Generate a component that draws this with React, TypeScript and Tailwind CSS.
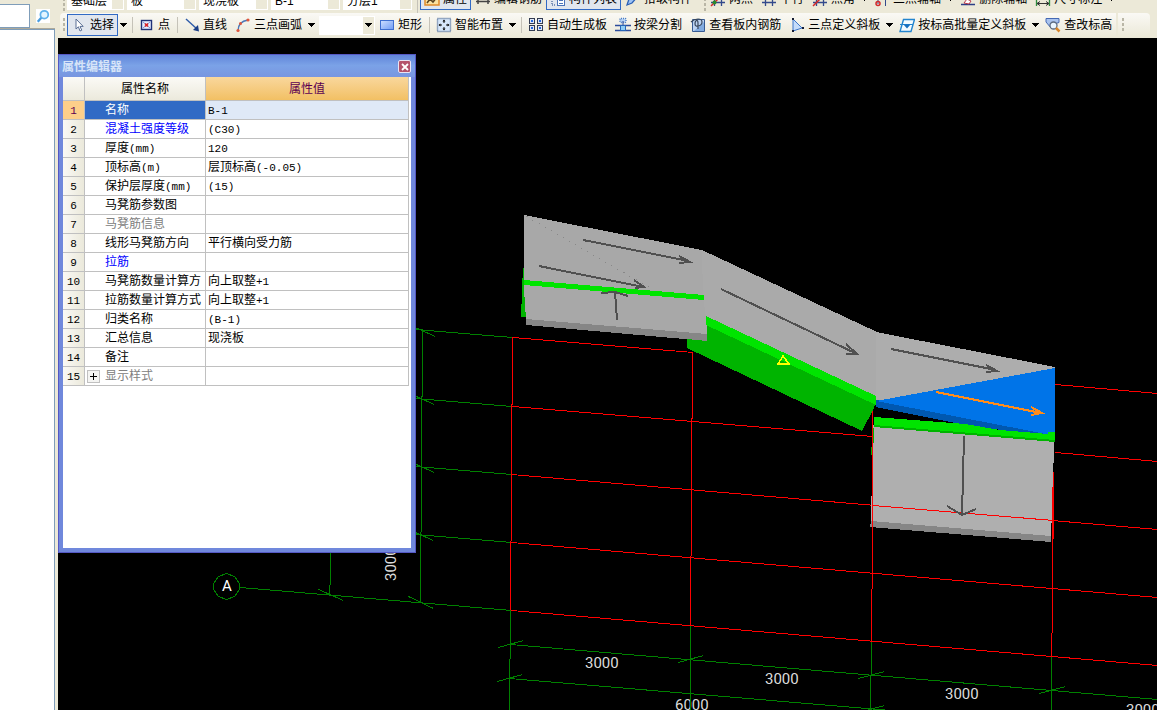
import { useState, type ReactNode } from 'react';
import { clsx } from 'clsx';

const FONT = "font-['Liberation_Sans','Noto_Sans_CJK_SC',sans-serif]";

type Row = { name: string; value: string; tone?: 'link' | 'muted'; expandable?: boolean };

const ROWS: Row[] = [
  { name: '名称', value: 'B-1' },
  { name: '混凝土强度等级', value: '(C30)', tone: 'link' },
  { name: '厚度(mm)', value: '120' },
  { name: '顶标高(m)', value: '层顶标高(-0.05)' },
  { name: '保护层厚度(mm)', value: '(15)' },
  { name: '马凳筋参数图', value: '' },
  { name: '马凳筋信息', value: '', tone: 'muted' },
  { name: '线形马凳筋方向', value: '平行横向受力筋' },
  { name: '拉筋', value: '', tone: 'link' },
  { name: '马凳筋数量计算方', value: '向上取整+1' },
  { name: '拉筋数量计算方式', value: '向上取整+1' },
  { name: '归类名称', value: '(B-1)' },
  { name: '汇总信息', value: '现浇板' },
  { name: '备注', value: '' },
  { name: '显示样式', value: '', tone: 'muted', expandable: true },
];

/* ---------- icons ---------- */

function Glyph({ children }: { children: ReactNode }) {
  return (
    <svg viewBox="0 0 16 16" className="size-4 shrink-0" fill="none" aria-hidden="true">
      {children}
    </svg>
  );
}

const CursorIcon = () => (
  <Glyph>
    <path d="M5 2v10l2.4-2.2L9 14l1.8-.8L9 9.4h3.2z" fill="#fff" stroke="#5b6f95" />
  </Glyph>
);

const PointIcon = () => (
  <Glyph>
    <rect x="2.5" y="3.5" width="10" height="9" fill="#e4ecff" stroke="#1f3278" strokeWidth="1.4" />
    <path d="M4 5l7 6M11 5l-7 6" stroke="#7f96d8" />
    <path d="M6 6.5l3 3M9 6.5l-3 3" stroke="#e02020" strokeWidth="1.6" />
  </Glyph>
);

const LineIcon = () => (
  <Glyph>
    <path d="M2 2l11 10" stroke="#2c5aa8" strokeWidth="1.4" />
    <path d="M15 14.5l-6-1.5 5-5z" fill="#1b3f87" />
  </Glyph>
);

const ArcIcon = () => (
  <Glyph>
    <path d="M3 14C3 8 6 4 13 3" stroke="#4a78b8" strokeWidth="1.4" />
    <circle cx="3" cy="13.5" r="1.6" fill="#e0563c" />
    <circle cx="5.5" cy="6.5" r="1.5" fill="#e0563c" />
    <circle cx="13" cy="3" r="1.6" fill="#e0563c" />
  </Glyph>
);

const RectIcon = () => (
  <Glyph>
    <defs>
      <linearGradient id="rectFill" x1="0" y1="0" x2="1" y2="1">
        <stop offset="0" stopColor="#cfe0ff" />
        <stop offset="1" stopColor="#6f9bf5" />
      </linearGradient>
    </defs>
    <rect x="1.5" y="3.5" width="13" height="9" fill="url(#rectFill)" stroke="#3f6fd0" />
  </Glyph>
);

const SmartIcon = () => (
  <Glyph>
    <rect x="1.5" y="1.5" width="13" height="13" fill="#d8e8fb" stroke="#41608f" strokeWidth="1.4" strokeDasharray="1 1" />
    <path d="M8 3v3M8 10v3M3 8h3M10 8h3" stroke="#111" />
    <path d="M6.5 4.500h3L8 2.500zM6.500 11.500h3l-1.500 2zM4.500 6.500v3l-2-1.500zM11.500 6.500v3l2-1.500z" fill="#111" />
  </Glyph>
);

const GridBoxesIcon = () => (
  <Glyph>
    {[1.5, 9.5].map((x) =>
      [1.5, 8.5].map((y) => (
        <g key={`${x}-${y}`}>
          <rect x={x} y={y} width="5" height="5" fill="#dfe8f8" stroke="#333c52" />
          <rect x={x + 1.5} y={y + 1.5} width="2" height="2" fill="#2467e0" />
        </g>
      )),
    )}
  </Glyph>
);

const BeamSplitIcon = () => (
  <Glyph>
    <rect x="5" y="1.5" width="6" height="4" rx="1" fill="#b7d3f4" stroke="#4c7dc4" strokeWidth="1.4" strokeDasharray="1 1" />
    <path d="M0 8.5h16M0 13.5h16" stroke="#2c4c9c" strokeWidth="1.4" />
    <rect x="5.5" y="8.5" width="5" height="5" fill="#8ecdf5" stroke="#2867b8" />
    <path d="M8 4v4" stroke="#2c4c9c" />
  </Glyph>
);

const RebarViewIcon = () => (
  <Glyph>
    <path d="M2.500 2.500h12v12h-12z" fill="#bcd3f2" stroke="#375b93" />
    <path d="M4 14l10-9v9z" fill="#82abdf" />
    <path d="M1 5c4-4 11-4 11 0s-7 6-7 2 3-5 3-1v6" stroke="#38475c" strokeWidth="1.2" />
  </Glyph>
);

const ThreePointIcon = () => (
  <Glyph>
    <path d="M4 2l9 9-9 3z" fill="#c5dcfa" stroke="#3a74c8" />
    <path d="M3 1h2v2H3zM13 10h2v2h-2zM3 13h2v2H3z" fill="#141c33" />
  </Glyph>
);

const BatchSlopeIcon = () => (
  <Glyph>
    <path d="M4.500 2.500h11l-3.500 12H1z" fill="#f4fbff" stroke="#2385cf" strokeWidth="1.4" />
    <path d="M1 7.500h13" stroke="#2385cf" />
    <path d="M4.500 7.500h7L8 11.500z" fill="#176fbf" />
  </Glyph>
);

const CheckLevelIcon = () => (
  <Glyph>
    <path d="M1 1.500h13v4L9 7 6 11 1 5z" fill="#a9c3ee" stroke="#4469b4" />
    <circle cx="8.500" cy="8.500" r="3.500" fill="#eaf6ff" stroke="#5c6b80" strokeWidth="1.3" />
    <path d="M11 11l3.500 3.500" stroke="#d9862a" strokeWidth="2.500" />
  </Glyph>
);

const PropsIcon = () => (
  <Glyph>
    <rect x="1" y="2" width="14" height="12" fill="#fbe2a0" stroke="#e08a28" strokeWidth="1.5" />
    <path d="M3 12l3-4 3 3 4-5" stroke="#5a4420" strokeWidth="1.600" />
  </Glyph>
);

const EditBarIcon = () => (
  <Glyph>
    <path d="M1 10.500h14M3 8v5M13 8v5" stroke="#444" strokeWidth="1.500" />
  </Glyph>
);

const ListIcon = () => (
  <Glyph>
    <path d="M2 4v10h4" stroke="#5b76a5" strokeDasharray="1 1" strokeWidth="1.500" />
    <rect x="7.500" y="3.500" width="7" height="11" fill="#fff" stroke="#4c74b8" />
    <path d="M9 6.500h4M9 9.500h4M9 12.500h4" stroke="#4c74b8" />
  </Glyph>
);

const PickIcon = () => (
  <Glyph>
    <path d="M2 14l2-6 6-6 3 3-6 7z" fill="#9cc2f4" stroke="#2a60b5" strokeWidth="1.300" />
  </Glyph>
);

function AxisIcon({ mark }: { mark?: 'green' | 'red' }) {
  return (
    <Glyph>
      <path d="M1 11.500h14M4.500 2v13M11.500 2v13" stroke="#334a8c" strokeWidth="1.300" />
      {mark && <path d="M1 15L13 3" stroke="#d42a2a" strokeWidth="1.500" />}
      {mark === 'green' && <circle cx="4.500" cy="11.500" r="2" fill="#2b8a2b" />}
    </Glyph>
  );
}

const AuxAxisIcon = () => (
  <Glyph>
    <path d="M4 2v11M11.500 2v13" stroke="#334a8c" />
    <circle cx="4" cy="12.500" r="2" stroke="#d42a2a" strokeWidth="1.500" />
  </Glyph>
);

const EraseIcon = () => (
  <Glyph>
    <path d="M1 13.500h14" stroke="#2b3e86" strokeWidth="1.500" />
    <path d="M4 12l3-4 4 2-2 3z" fill="#fff" stroke="#b7384a" />
  </Glyph>
);

const DimIcon = () => (
  <Glyph>
    <path d="M1.500 4v11M14.500 4v11" stroke="#2c8a3c" strokeWidth="1.300" />
    <path d="M2 12.500h12M5 10.500l-3 2 3 2M11 10.500l3 2-3 2" stroke="#333" />
  </Glyph>
);

/* ---------- toolbar parts ---------- */

const Grip = () => (
  <span className="h-[15px] w-0.5 shrink-0 self-center bg-[repeating-linear-gradient(to_bottom,#b9b6a6_0_3px,transparent_3px_5px)]" />
);

const Sep = () => <span className="my-auto ml-[3px] mr-0.5 h-4 w-px shrink-0 bg-[#c5c2b8]" />;

const Caret = () => (
  <svg viewBox="0 0 7 4" className="h-1 w-[7px]" fill="#000" shapeRendering="crispEdges" aria-hidden="true">
    <path d="M0 0h7L3.500 4z" />
  </svg>
);

const DropArrow = ({ label }: { label: string }) => (
  <button type="button" aria-label={`${label} 选项`} className="flex h-[22px] w-[11px] shrink-0 items-center justify-center">
    <Caret />
  </button>
);

function Tool({ icon, label, active }: { icon: ReactNode; label: string; active?: boolean }) {
  return (
    <button
      type="button"
      aria-pressed={active}
      className={clsx(
        'flex h-[22px] shrink-0 items-center gap-[3px] whitespace-nowrap border px-[3px]',
        active ? 'border-[#316ac5] bg-[#e1e6ee]' : 'border-transparent',
      )}
    >
      {icon}
      {label}
    </button>
  );
}

function Combo({ label, options, arrow, className }: { label: string; options: string[]; arrow?: boolean; className: string }) {
  return (
    <div className={clsx('relative flex h-[19px] shrink-0 bg-white', className)}>
      <select aria-label={label} className="h-full w-full appearance-none bg-transparent pl-1 pr-3 outline-none">
        {options.map((option) => (
          <option key={option}>{option}</option>
        ))}
      </select>
      <span className="pointer-events-none absolute inset-y-px right-px flex w-[11px] items-center justify-center bg-[#ece9d8]">
        {arrow && <Caret />}
      </span>
    </div>
  );
}

function Toolbars() {
  return (
    <header className="shrink-0 overflow-hidden bg-[#ece9d8]">
      <div className="flex h-[13px] items-end pb-[3px] pl-[5px]">
        <Grip />
        <div className="ml-0.5 flex items-end gap-[3px]">
          <Combo label="楼层" options={['基础层']} className="w-[57px]" />
          <Combo label="构件类型" options={['板']} className="w-[69px]" />
          <Combo label="构件" options={['现浇板']} className="w-[69px]" />
          <Combo label="名称" options={['B-1']} className="w-[69px]" />
          <Combo label="分层" options={['分层1']} className="w-[69px]" />
        </div>
        <span className="w-0.5 shrink-0" />
        <Sep />
        <Tool icon={<PropsIcon />} label="属性" active />
        <Tool icon={<EditBarIcon />} label="编辑钢筋" />
        <Tool icon={<ListIcon />} label="构件列表" active />
        <Tool icon={<PickIcon />} label="拾取构件" />
        <span className="w-2 shrink-0" />
        <Grip />
        <Tool icon={<AxisIcon mark="green" />} label="两点" />
        <Tool icon={<AxisIcon />} label="平行" />
        <Tool icon={<AxisIcon mark="red" />} label="点角" />
        <DropArrow label="点角" />
        <Tool icon={<AuxAxisIcon />} label="三点辅轴" />
        <DropArrow label="三点辅轴" />
        <Tool icon={<EraseIcon />} label="删除辅轴" />
        <Tool icon={<DimIcon />} label="尺寸标注" />
        <DropArrow label="尺寸标注" />
      </div>
      <div className="flex gap-0.5 pl-0.5">
        <div className="flex h-[25px] items-center rounded-l bg-linear-to-b from-[#faf9f5] to-[#ebe8d7] pb-px pl-[3px]">
          <Grip />
          <span className="w-0.5" />
          <Tool icon={<CursorIcon />} label="选择" active />
          <DropArrow label="选择" />
          <Sep />
          <Tool icon={<PointIcon />} label="点" />
          <Sep />
          <Tool icon={<LineIcon />} label="直线" />
          <Tool icon={<ArcIcon />} label="三点画弧" />
          <DropArrow label="三点画弧" />
          <Combo label="画弧方式" options={['']} arrow className="ml-0.5 w-14" />
          <Tool icon={<RectIcon />} label="矩形" />
          <Sep />
          <Tool icon={<SmartIcon />} label="智能布置" />
          <DropArrow label="智能布置" />
          <Sep />
          <Tool icon={<GridBoxesIcon />} label="自动生成板" />
          <Tool icon={<BeamSplitIcon />} label="按梁分割" />
          <Tool icon={<RebarViewIcon />} label="查看板内钢筋" />
          <Tool icon={<ThreePointIcon />} label="三点定义斜板" />
          <DropArrow label="三点定义斜板" />
          <Tool icon={<BatchSlopeIcon />} label="按标高批量定义斜板" />
          <DropArrow label="按标高批量定义斜板" />
          <Tool icon={<CheckLevelIcon />} label="查改标高" />
        </div>
        <div className="flex h-[25px] w-8 items-center rounded-r bg-linear-to-b from-[#faf9f5] to-[#ebe8d7] pl-1">
          <Grip />
        </div>
      </div>
    </header>
  );
}

/* ---------- property editor ---------- */

// Latin runs are set in a half-width monospace next to the full-width characters
function Mixed({ text }: { text: string }) {
  return text.split(/([\x20-\x7e]+)/).map((part, i) =>
    i % 2 ? (
      <span key={i} className="font-['Liberation_Mono',monospace] text-[11px] leading-none">
        {part}
      </span>
    ) : (
      part
    ),
  );
}

function PropertyEditor() {
  const [selected, setSelected] = useState(0);

  return (
    <section
      aria-label="属性编辑器"
      className="absolute left-0 top-4 flex h-[499px] w-[358px] flex-col border-x-[5px] border-b-[5px] border-[#7088dc] bg-[#7088dc] outline-1 -outline-offset-1 outline-[#5558c4]"
    >
      <div className="-mx-[5px] flex h-[23px] shrink-0 items-center justify-between bg-linear-to-b from-[#5f83d8] via-[#7ba2e7] to-[#7896e0] pl-1 pr-[5px] pt-0.5">
        <h2 className="font-bold text-[#d6e4f8]">属性编辑器</h2>
        <button type="button" aria-label="关闭" className="flex size-[13px] items-center justify-center rounded-xs border border-[#e9e4f4] bg-[#b5536c]">
          <svg viewBox="0 0 8 8" className="size-2" stroke="#fff" strokeWidth="1.800" aria-hidden="true">
            <path d="M1 1l6 6M7 1L1 7" />
          </svg>
        </button>
      </div>
      <div className="flex-1 bg-white pr-0.5">
        <table className="w-full table-fixed border-separate border-spacing-0">
          <colgroup>
            <col className="w-[22px]" />
            <col className="w-[121px]" />
            <col />
          </colgroup>
          <thead>
            <tr className="h-6 bg-linear-to-b from-[#fbfaf6] to-[#ebe9db]">
              <th className="border-b border-r border-[#c0c0c0]" />
              <th className="border-b border-r border-[#c0c0c0] font-normal">属性名称</th>
              <th className="border-b border-r border-[#c0c0c0] bg-linear-to-b from-[#f9d79c] to-[#f2c063] font-normal text-[#5c0052]">属性值</th>
            </tr>
          </thead>
          <tbody>
            {ROWS.map((row, i) => {
              const active = i === selected;
              return (
                <tr key={row.name} className="h-[19px] leading-[18px]" onClick={() => setSelected(i)}>
                  <th
                    className={clsx(
                      'border-b border-r border-[#c0c0c0] p-0 font-normal',
                      active ? 'bg-[#fdcf8a] text-[#5c0052]' : 'bg-linear-to-r from-[#faf9f5] to-[#ebe9db]',
                    )}
                  >
                    <Mixed text={String(i + 1)} />
                  </th>
                  <td
                    className={clsx(
                      'relative overflow-hidden whitespace-nowrap border-b border-r border-[#c0c0c0] p-0 pl-5',
                      active && 'bg-[#316ac5] text-white',
                      !active && row.tone === 'link' && 'text-[#0000ff]',
                      !active && row.tone === 'muted' && 'text-[#808080]',
                    )}
                  >
                    {row.expandable && (
                      <button
                        type="button"
                        aria-label={`展开${row.name}`}
                        className="absolute left-0.5 top-[3px] flex size-[13px] items-center justify-center border border-[#c0c0c0] bg-[#f4f4f2]"
                      >
                        <svg viewBox="0 0 7 7" className="size-[7px]" stroke="#000" aria-hidden="true">
                          <path d="M0 3.500h7M3.500 0v7" />
                        </svg>
                      </button>
                    )}
                    <Mixed text={row.name} />
                  </td>
                  <td className={clsx('border-b border-r border-[#c0c0c0] p-0 pl-0.5', active && 'bg-[#dfe9f7]')}>
                    <Mixed text={row.value} />
                  </td>
                </tr>
              );
            })}
          </tbody>
        </table>
      </div>
    </section>
  );
}

/* ---------- model view ---------- */

const AXIS_GREEN = [
  'M415 329L512 337M415 398L511 406M415 466L511 474M415 534L511 542M240 587L511 610',
  'M330 540V575L329 594M422 329L421 466L420 602',
  'M510 610L509 710M690 625V710M871 641L870 710M1051 656V710',
  'M510 644L1157 699M509 678L890 710',
  'M318 589l25 11M408 596l25 12M408 529l25 11M409 461l25 11M409 393l25 11M410 325l25 11',
  'M498 647l25 -7M678 662l25 -7M858 678l26 -7M1039 693l26 -7M497 681l25 -7M858 712l26 -7',
].join('');

const AXIS_RED = [
  'M512 337L693 352M1055 384L1157 393M512 406L872 436M1055 452L1157 461',
  'M511 474L1157 529M511 542L1157 597M511 610L1157 665',
  'M512 337L511 474L510 610M692 352L690 625M872 408V537L871 641M1053 472L1052 610L1051 656',
].join('');

// shaft plus open head, all slab direction arrows share it
const ARROWS = [
  'M583 240L689 261M679 256l11 6l-11 1',
  'M539 266L643 287M634 280l10 7l-9 1',
  'M721 289L857 354M846 344l11 10h-11',
  'M891 349L996 370M986 365l11 6l-11 1',
  'M964 436L962 515M947 506l15 9l14 -6',
  'M617 320L615 292M601 293l14 -1l13 4',
].join('');

const LABELS = [
  { x: 585, y: 668, text: '3000' },
  { x: 765, y: 684, text: '3000' },
  { x: 945, y: 699, text: '3000' },
  { x: 1126, y: 715, text: '3000' },
  { x: 675, y: 710, text: '6000' },
];

function ModelView() {
  return (
    <svg
      viewBox="58 38 1099 672"
      preserveAspectRatio="xMinYMin slice"
      className="absolute inset-0 h-full w-full"
      shapeRendering="crispEdges"
      fill="none"
      role="img"
      aria-label="三维视图"
    >
      <g fontSize="15" fill="#dcdcdc" className="font-[Roboto,sans-serif]">
        {LABELS.map((label) => (
          <text key={label.x} x={label.x} y={label.y}>
            {label.text}
          </text>
        ))}
        <text transform="translate(396 581) rotate(-90)">3000</text>
        <text x="222" y="591" fill="#fff">
          A
        </text>
      </g>

      {/* half a pixel puts one-pixel strokes on whole device pixels */}
      <g transform="translate(.5 .5)">
        <path d={AXIS_GREEN} stroke="#008000" />
        <path d="M226 573l8 3l5 7v6l-5 7l-8 3l-8 -3l-5 -7v-6l5 -7z" stroke="#008000" />
        <path d={AXIS_RED} stroke="#ff0000" />
      </g>

      {/* left slab */}
      <path d="M523 265l-2 52h5v-32z" fill="#00b400" />
      <path d="M524 215L702 250L704 298L707 317V335L526 319L524 290z" fill="#a8a8a8" />
      <path d="M526 319L707 334V341L526 325z" fill="#868686" />

      {/* sloped slab */}
      <path d="M687 339L707 341V322L876 402L874 408L862 431L687 348z" fill="#00b400" />
      <path d="M702 250L877 332V398L706 318L703 296z" fill="#aaaaaa" />
      <path d="M706 316L876 396V405L706 325z" fill="#00e400" />
      <path d="M524 280L704 295V300L524 285z" fill="#00e400" />

      {/* right slabs */}
      <path d="M876 332L1055 367V372L876 402z" fill="#adadad" />
      <path d="M876 400L1055 430V434H1030L965 425L876 407z" fill="#0058b0" />
      <path d="M876 401L1055 368V434H1046z" fill="#0074e8" />
      <path d="M873 425L1054 440L1053 486L1051 536L871 521z" fill="#afafaf" />
      <path d="M871 521L1051 536V542L870 527z" fill="#868686" />
      <path d="M874 424L1055 438V442L874 427z" fill="#00b400" />
      <path d="M874 417L965 424L1000 430L1048 434V432H1055V440L874 425z" fill="#00e400" />

      <g transform="translate(.5 .5)">
        <path d="M873 427V442M871 446V454" stroke="#00b400" />
        <path d="M526 216L649 287" stroke="#888" strokeDasharray="1 6" />
        <path d="M872 505L1053 520M872 442V537M1052 486V542" stroke="#ff0000" />
      </g>
      <path d={ARROWS} stroke="#505050" strokeWidth="2" />
      <path d="M936 392L1041 413M1031 407l11 6l-11 2" stroke="#ff8c1a" strokeWidth="2" />
      <path d="M783 356L778 364H789z" stroke="#ffff00" strokeWidth="1.500" />
    </svg>
  );
}

function SidePanel() {
  return (
    <aside className="flex w-[55px] shrink-0 flex-col bg-[#ece9d8]">
      <div className="flex h-[29px] items-stretch border-b border-[#aca899] pt-1">
        <input aria-label="搜索" className="w-[30px] border-y border-r border-[#7f9db9] bg-white px-1 outline-none" />
        <button type="button" aria-label="查找" className="flex flex-1 items-center justify-center">
          <svg viewBox="0 0 16 16" className="size-3.5 bg-white" fill="none" aria-hidden="true">
            <circle cx="9.500" cy="6.500" r="4.500" fill="#e4f5ff" stroke="#62b2ec" strokeWidth="2" />
            <path d="M6 10l-4 4.500" stroke="#4a9ee0" strokeWidth="2.600" />
          </svg>
        </button>
      </div>
      <div className="flex-1 border-r border-t border-[#7f9db9] bg-white" />
    </aside>
  );
}

export default function App() {
  return (
    <div className={clsx('flex h-screen overflow-hidden bg-[#ece9d8] text-[12px] text-black', FONT)}>
      <SidePanel />
      <div className="ml-[3px] flex min-w-0 flex-1 flex-col">
        <Toolbars />
        <main className="relative flex-1 overflow-hidden bg-black">
          <ModelView />
          <PropertyEditor />
        </main>
      </div>
    </div>
  );
}
